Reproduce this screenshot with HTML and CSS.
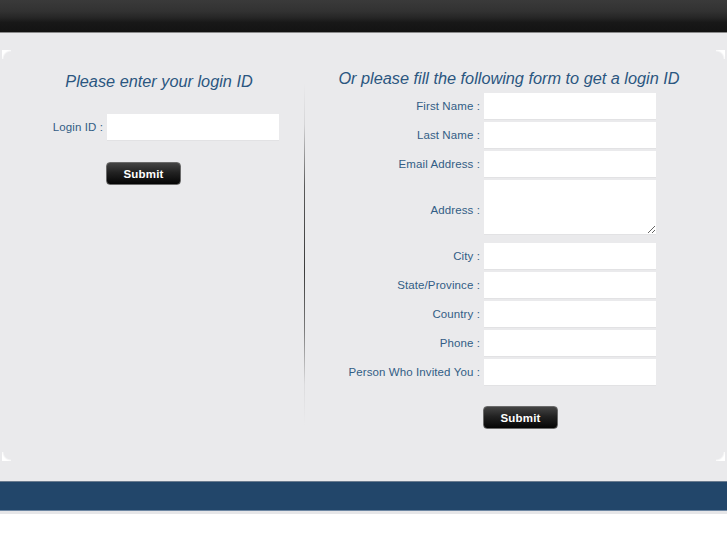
FILE: index.html
```html
<!DOCTYPE html>
<html lang="en">
<head>
    <meta charset="UTF-8">
    <meta name="viewport" content="width=device-width, initial-scale=1.0">
    <title>Login</title>
    <link rel="stylesheet" href="styles.css">
</head>
<body>
    <div class="top-bar"></div>

    <div class="main">
        <div class="panel">
            <span class="corner tl"></span>
            <span class="corner tr"></span>
            <span class="corner bl"></span>
            <span class="corner br"></span>

            <div class="login-col">
                <h2>Please enter your login ID</h2>
                <form class="form-grid login-form">
                    <label for="login_id">Login ID :</label>
                    <input type="text" id="login_id" name="login_id">
                    <span></span>
                    <button type="submit" class="submit-btn">Submit</button>
                </form>
            </div>

            <div class="divider"></div>

            <div class="signup-col">
                <h2>Or please fill the following form to get a login ID</h2>
                <form class="form-grid signup-form">
                    <label for="first_name">First Name :</label>
                    <input type="text" id="first_name" name="first_name">

                    <label for="last_name">Last Name :</label>
                    <input type="text" id="last_name" name="last_name">

                    <label for="email">Email Address :</label>
                    <input type="text" id="email" name="email">

                    <label for="address">Address :</label>
                    <textarea id="address" name="address"></textarea>

                    <label for="city">City :</label>
                    <input type="text" id="city" name="city">

                    <label for="state">State/Province :</label>
                    <input type="text" id="state" name="state">

                    <label for="country">Country :</label>
                    <input type="text" id="country" name="country">

                    <label for="phone">Phone :</label>
                    <input type="text" id="phone" name="phone">

                    <label for="invited_by">Person Who Invited You :</label>
                    <input type="text" id="invited_by" name="invited_by">

                    <span></span>
                    <button type="submit" class="submit-btn">Submit</button>
                </form>
            </div>
        </div>
    </div>

    <div class="footer"></div>
    <div class="footer-strip"></div>
</body>
</html>
```

FILE: styles.css
```css
* {
    margin: 0;
    padding: 0;
    box-sizing: border-box;
}

body {
    font-family: 'Liberation Sans', Arial, sans-serif;
    background: #fff;
}

.top-bar {
    height: 33px;
    background: linear-gradient(to bottom, #3a3a3a 0%, #323232 35%, #262626 55%, #181818 70%, #131313 100%);
    border-bottom: 1px solid #8a8a8a;
}

.main {
    background: #eaeaec;
    padding: 17px 2px 20px;
}

.panel {
    position: relative;
    height: 411px;
    display: flex;
}

.corner {
    position: absolute;
    width: 9px;
    height: 9px;
}

.corner.tl {
    top: 0;
    left: 0;
    background: radial-gradient(circle at 100% 100%, transparent 7px, #fff 9px);
}

.corner.tr {
    top: 0;
    right: 0;
    background: radial-gradient(circle at 0 100%, transparent 7px, #fff 9px);
}

.corner.bl {
    bottom: 0;
    left: 0;
    background: radial-gradient(circle at 100% 0, transparent 7px, #fff 9px);
}

.corner.br {
    bottom: 0;
    right: 0;
    background: radial-gradient(circle at 0 0, transparent 7px, #fff 9px);
}

h2 {
    font-size: 16.3px;
    line-height: 20px;
    font-style: italic;
    font-weight: normal;
    color: #2b5680;
    text-align: center;
}

.login-col {
    width: 302px;
    padding-left: 12px;
}

.login-col h2 {
    margin-top: 21px;
}

.signup-col {
    flex: 1;
}

.signup-col h2 {
    margin-top: 18px;
    padding-right: 12px;
}

.divider {
    width: 1px;
    height: 342px;
    margin-top: 33px;
    background: linear-gradient(to bottom, rgba(90,90,90,0) 0%, #d6d6d8 12%, #5a5a5a 30%, #3c3c3c 55%, #7a7a7a 72%, #dcdcde 88%, rgba(90,90,90,0) 100%);
}

.form-grid {
    display: grid;
    grid-template-columns: 89px 172px;
    column-gap: 4px;
    row-gap: 3px;
    align-items: center;
}

.login-form {
    margin-top: 23px;
}

.signup-form {
    grid-template-columns: 175px 172px;
    margin-top: 5px;
}

label {
    font-size: 11.5px;
    color: #325d85;
    text-align: right;
    letter-spacing: 0.1px;
}

input, textarea {
    width: 172px;
    height: 26px;
    border: none;
    background: #fff;
    box-shadow: 0 1px 0 #e2e2e4;
    font-family: inherit;
    font-size: 12px;
    padding: 3px 5px;
}

input:focus, textarea:focus {
    outline: none;
}

textarea {
    height: 54px;
    margin-bottom: 6px;
    resize: vertical;
}

.submit-btn {
    width: 75px;
    height: 23px;
    margin-left: -1px;
    background: linear-gradient(to bottom, #444 0%, #222 45%, #050505 100%);
    border: 1px solid #6a6a6a;
    border-radius: 4px;
    color: #fff;
    font-family: inherit;
    font-size: 11.5px;
    font-weight: bold;
    letter-spacing: 0.2px;
    cursor: pointer;
}

.login-form .submit-btn {
    margin-top: 19px;
}

.signup-form .submit-btn {
    margin-top: 18px;
}

.footer {
    height: 30px;
    background: #22466a;
    border-top: 1px solid #6a7b8f;
    border-bottom: 1px solid #6d86a2;
}

.footer-strip {
    height: 3px;
    background: #e6e6e8;
}
```
